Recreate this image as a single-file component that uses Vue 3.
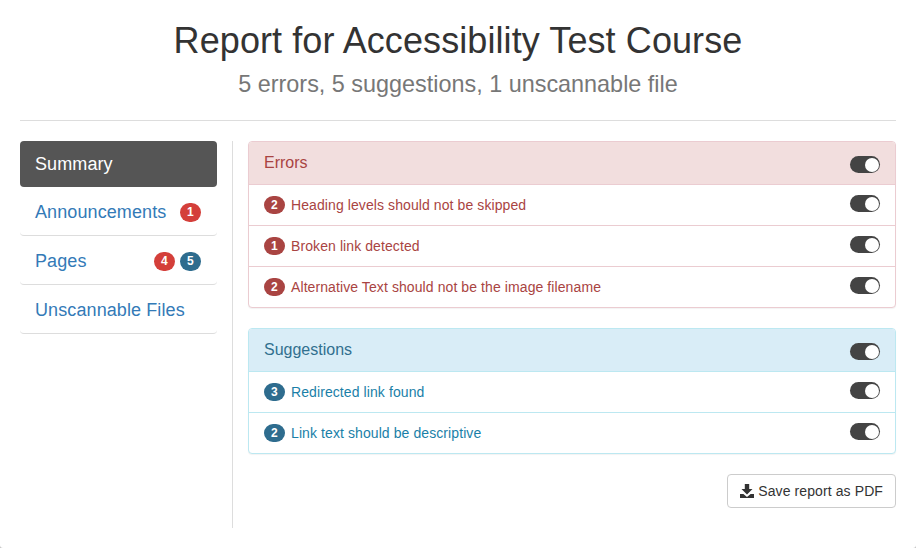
<template>
  <div class="page">
    <header class="page-header">
      <h1>Report for Accessibility Test Course</h1>
      <p class="subtitle">5 errors, 5 suggestions, 1 unscannable file</p>
    </header>

    <div class="content">
      <nav class="side-nav">
        <a
          v-for="item in navItems"
          :key="item.label"
          class="nav-item"
          :class="{ active: item.active }"
          href="#"
        >
          <span>{{ item.label }}</span>
          <span v-if="item.badges" class="nav-badges">
            <span
              v-for="badge in item.badges"
              :key="badge.type"
              class="badge"
              :class="badge.type"
            >{{ badge.count }}</span>
          </span>
        </a>
      </nav>

      <main class="report">
        <section
          v-for="panel in panels"
          :key="panel.title"
          class="panel"
          :class="panel.type"
        >
          <div class="panel-heading">
            <span>{{ panel.title }}</span>
            <span class="toggle"></span>
          </div>
          <div v-for="row in panel.rows" :key="row.text" class="panel-row">
            <span class="count">{{ row.count }}</span>
            <span class="row-text">{{ row.text }}</span>
            <span class="toggle"></span>
          </div>
        </section>

        <div class="actions">
          <button class="btn" type="button">
            <svg class="icon" viewBox="0 0 14 14" width="14" height="14" aria-hidden="true">
              <path d="M4.8 0h4.4v5h3.3L7 10.4 1.5 5h3.3z" />
              <path d="M0 10h3.4L7 13l3.6-3H14v4H0z" />
            </svg>
            Save report as PDF
          </button>
        </div>
      </main>
    </div>
  </div>
</template>

<script setup>
const navItems = [
  { label: 'Summary', active: true },
  { label: 'Announcements', badges: [{ type: 'error', count: 1 }] },
  { label: 'Pages', badges: [{ type: 'error', count: 4 }, { type: 'info', count: 5 }] },
  { label: 'Unscannable Files' }
]

const panels = [
  {
    title: 'Errors',
    type: 'danger',
    rows: [
      { count: 2, text: 'Heading levels should not be skipped' },
      { count: 1, text: 'Broken link detected' },
      { count: 2, text: 'Alternative Text should not be the image filename' }
    ]
  },
  {
    title: 'Suggestions',
    type: 'suggest',
    rows: [
      { count: 3, text: 'Redirected link found' },
      { count: 2, text: 'Link text should be descriptive' }
    ]
  }
]
</script>

<style>
body {
  background: #c4c4c4;
}
</style>

<style scoped>
.page {
  box-sizing: border-box;
  width: 916px;
  height: 548px;
  padding: 0 20px;
  background: #fff;
  border-radius: 0 0 3px 3px;
  font-family: "Liberation Sans", Arial, sans-serif;
  font-size: 14px;
  letter-spacing: 0.09px;
  color: #333;
  overflow: hidden;
}

.page-header {
  height: 121px;
  box-sizing: border-box;
  border-bottom: 1px solid #ddd;
  text-align: center;
}

h1 {
  margin: 0;
  padding-top: 21px;
  font-size: 36px;
  font-weight: 400;
  line-height: 40px;
}

.subtitle {
  margin: 7px 0 0;
  font-size: 23.4px;
  letter-spacing: 0;
  line-height: 32px;
  color: #777;
}

.content {
  display: flex;
  margin-top: 20px;
  height: 387px;
}

.side-nav {
  width: 197px;
  margin-right: 15px;
  flex-shrink: 0;
  font-size: 18px;
  letter-spacing: 0.1px;
}

.nav-item {
  display: flex;
  justify-content: space-between;
  align-items: center;
  box-sizing: border-box;
  height: 49px;
  padding: 2px 16px 0 15px;
  color: #337ab7;
  text-decoration: none;
  border-bottom: 1px solid #ddd;
  border-radius: 0 0 4px 4px;
}

.nav-item.active {
  height: 46px;
  padding-top: 0;
  background: #555;
  color: #fff;
  border-bottom: 0;
  border-radius: 4px;
}

.nav-badges {
  display: flex;
  gap: 5px;
}

.badge {
  display: block;
  width: 21px;
  height: 19px;
  line-height: 19px;
  border-radius: 10px;
  text-align: center;
  font-size: 12px;
  font-weight: 700;
  color: #fff;
}

.badge.error {
  background: #d43f3a;
}

.badge.info {
  background: #2e6c8e;
}

.report {
  flex: 1;
  border-left: 1px solid #ddd;
  padding-left: 15px;
}

.panel {
  margin-bottom: 20px;
  border: 1px solid;
  border-radius: 4px;
  background: #fff;
  box-shadow: 0 1px 1px rgba(0, 0, 0, 0.05);
  overflow: hidden;
}

.panel-heading {
  display: flex;
  justify-content: space-between;
  align-items: center;
  height: 42px;
  padding: 0 15px;
  font-size: 16px;
  letter-spacing: 0;
  border-bottom: 1px solid;
}

.panel-heading .toggle {
  margin-top: 3px;
}

.panel-row {
  display: flex;
  align-items: center;
  height: 40px;
  padding: 0 15px;
  border-bottom: 1px solid;
}

.panel-row:last-child {
  border-bottom: 0;
}

.panel-row .toggle {
  margin-bottom: 3px;
}

.count {
  width: 21px;
  height: 18px;
  line-height: 18px;
  margin-right: 6px;
  border-radius: 9px;
  text-align: center;
  font-size: 12px;
  font-weight: 700;
  color: #fff;
}

.row-text {
  flex: 1;
}

.toggle {
  position: relative;
  display: block;
  width: 30px;
  height: 17px;
  border-radius: 9px;
  background: #444;
}

.toggle::after {
  content: '';
  position: absolute;
  top: 1.5px;
  right: 1.5px;
  width: 14px;
  height: 14px;
  border-radius: 50%;
  background: #fff;
}

.panel.danger {
  border-color: #ebccd1;
}

.panel.danger .panel-heading {
  background: #f2dede;
  color: #a94442;
  border-color: #ebccd1;
}

.panel.danger .panel-row {
  color: #a94442;
  border-color: #ebccd1;
}

.panel.danger .count {
  background: #a94442;
}

.panel.suggest {
  border-color: #bce8f1;
}

.panel.suggest .panel-heading {
  background: #d9edf7;
  color: #31708f;
  border-color: #bce8f1;
}

.panel.suggest .panel-row {
  color: #1a7fa8;
  border-color: #bce8f1;
}

.panel.suggest .count {
  background: #2e6c8e;
}

.actions {
  display: flex;
  justify-content: flex-end;
}

.btn {
  display: flex;
  align-items: center;
  gap: 4px;
  height: 34px;
  padding: 0 12px;
  border: 1px solid #ccc;
  border-radius: 4px;
  background: #fff;
  font: inherit;
  letter-spacing: 0.1px;
  color: #333;
}

.icon {
  fill: #333;
}
</style>
